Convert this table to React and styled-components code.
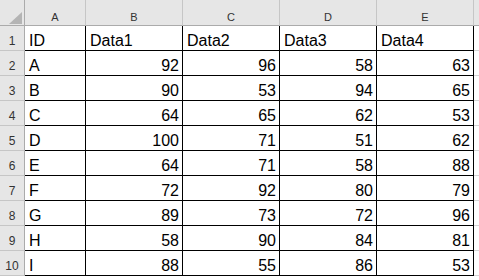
import React from "react";
import styled, { createGlobalStyle } from "styled-components";

const GlobalStyle = createGlobalStyle`
  html, body {
    margin: 0;
    padding: 0;
    background: #ffffff;
  }
  body {
    font-family: "Liberation Sans", Arial, sans-serif;
    overflow: hidden;
  }
`;

/* whole sheet: row header + A..E + a sliver of F */
const Sheet = styled.div`
  display: grid;
  grid-template-columns: 25px 61px repeat(4, 97px) 1fr;
  grid-template-rows: 26px;
  grid-auto-rows: 25px;
  width: 479px;
  height: 280px;
  overflow: hidden;
  background: #ffffff;
`;

const Corner = styled.div`
  box-sizing: border-box;
  background: #e6e6e6;
  border-right: 1px solid #ababab;
  border-bottom: 1px solid #ababab;
  display: flex;
  align-items: flex-end;
  justify-content: flex-end;
  padding: 0 2px 1px 0;
`;

const Triangle = styled.div`
  width: 13px;
  height: 12px;
  background: #b4b4b4;
  clip-path: polygon(100% 0, 100% 100%, 0 100%);
`;

const ColHeader = styled.div`
  box-sizing: border-box;
  background: #e6e6e6;
  border-right: ${(p) => (p.$last ? "none" : "1px solid #c6c6c6")};
  border-bottom: 1px solid #ababab;
  color: #333333;
  font-size: 11px;
  display: flex;
  align-items: flex-end;
  justify-content: center;
  padding-bottom: 2px;
`;

const RowHeader = styled.div`
  box-sizing: border-box;
  background: #e6e6e6;
  border-right: 1px solid #ababab;
  border-bottom: 1px solid #c6c6c6;
  color: #333333;
  font-size: 12px;
  display: flex;
  align-items: flex-end;
  justify-content: center;
  padding-bottom: 2px;
`;

const Cell = styled.div`
  box-sizing: border-box;
  border-right: 1px solid #000000;
  border-bottom: 1px solid #000000;
  color: #000000;
  font-size: 16px;
  white-space: nowrap;
  overflow: hidden;
  display: flex;
  align-items: flex-end;
  justify-content: ${(p) => (p.$num ? "flex-end" : "flex-start")};
  padding: ${(p) => (p.$num ? "0 3px 0 0" : "0 0 0 4px")};
  line-height: 19px;
`;

const Spare = styled.div`
  box-sizing: border-box;
  border-bottom: 1px solid #d4d4d4;
`;

const columns = ["A", "B", "C", "D", "E"];

const rows = [
  ["A", 92, 96, 58, 63],
  ["B", 90, 53, 94, 65],
  ["C", 64, 65, 62, 53],
  ["D", 100, 71, 51, 62],
  ["E", 64, 71, 58, 88],
  ["F", 72, 92, 80, 79],
  ["G", 89, 73, 72, 96],
  ["H", 58, 90, 84, 81],
  ["I", 88, 55, 86, 53],
];

export default function App() {
  return (
    <>
      <GlobalStyle />
      <Sheet>
        <Corner>
          <Triangle />
        </Corner>
        {columns.map((c) => (
          <ColHeader key={c}>{c}</ColHeader>
        ))}
        <ColHeader $last />

        <RowHeader>1</RowHeader>
        <Cell>ID</Cell>
        <Cell>Data1</Cell>
        <Cell>Data2</Cell>
        <Cell>Data3</Cell>
        <Cell>Data4</Cell>
        <Spare />

        {rows.map((r, i) => (
          <React.Fragment key={r[0]}>
            <RowHeader>{i + 2}</RowHeader>
            {r.map((v, j) => (
              <Cell key={j} $num={j > 0}>
                {v}
              </Cell>
            ))}
            <Spare />
          </React.Fragment>
        ))}
      </Sheet>
    </>
  );
}
